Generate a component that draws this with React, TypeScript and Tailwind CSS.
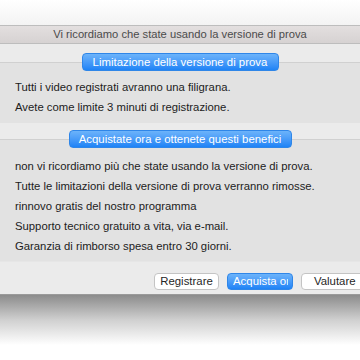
const font = { fontFamily: '"Liberation Sans", Arial, sans-serif' };

const blueBtn =
  'relative z-10 h-[18px] rounded-[4px] bg-gradient-to-b from-[#6cb3fa] to-[#1d83f6] border border-[#2f86e8] text-white text-[11.4px] leading-[16px] flex items-center justify-center';

function Line({ children }: { children: React.ReactNode }) {
  return <div className="h-[20px] leading-[20px] text-[11.3px] text-[#1c1c1c] whitespace-nowrap">{children}</div>;
}

export default function App() {
  return (
    <div className="w-[360px] h-[360px] bg-white overflow-hidden" style={font}>
      <div className="h-[25px] bg-gradient-to-b from-white to-[#f3f3f3]" />
      <div className="bg-[#ebebeb] border-b border-[#9a9a9a]">
        <div className="h-[19px] border-y border-[#bdbdbd] bg-gradient-to-b from-[#e3dfdf] to-[#d6d2d2] flex items-center justify-center text-[11.2px] text-[#4b4b4b] whitespace-nowrap">
          Vi ricordiamo che state usando la versione di prova
        </div>

        <div className="pt-[9px] flex justify-center">
          <div className={`${blueBtn} w-[197px]`}>Limitazione della versione di prova</div>
        </div>
        <div className="-mt-[9px] bg-[#e2e2e2] border-t border-[#d0d0d0] pl-[15px] pt-[14px] pb-[6px]">
          <Line>Tutti i video registrati avranno una filigrana.</Line>
          <Line>Avete come limite 3 minuti di registrazione.</Line>
        </div>

        <div className="pt-[7px] flex justify-center">
          <div className={`${blueBtn} w-[223px]`}>Acquistate ora e ottenete questi benefici</div>
        </div>
        <div className="-mt-[9px] bg-[#e2e2e2] border-t border-[#d0d0d0] pl-[15px] pt-[16px] pb-[5px]">
          <Line>non vi ricordiamo più che state usando la versione di prova.</Line>
          <Line>Tutte le limitazioni della versione di prova verranno rimosse.</Line>
          <Line>rinnovo gratis del nostro programma</Line>
          <Line>Supporto tecnico gratuito a vita, via e-mail.</Line>
          <Line>Garanzia di rimborso spesa entro 30 giorni.</Line>
        </div>

        <div className="h-[33px] pt-[11px] flex gap-[8px] pl-[154px] overflow-hidden border-t border-[#e6e6e6]">
          <div className="shrink-0 w-[65px] h-[17px] rounded-[4px] bg-white border border-[#c4c4c4] text-[11.4px] text-[#262626] flex items-center justify-center">
            Registrare
          </div>
          <div className="shrink-0 w-[66px] h-[17px] rounded-[4px] bg-gradient-to-b from-[#6cb3fa] to-[#1d83f6] border border-[#2f86e8] text-[11.4px] text-white flex items-center pl-[5px] pr-[4px]">
            <span className="overflow-hidden whitespace-nowrap">Acquista ora</span>
          </div>
          <div className="shrink-0 w-[80px] h-[17px] rounded-[4px] bg-white border border-[#c4c4c4] text-[11.4px] text-[#262626] flex items-center pl-[12px]">
            Valutare
          </div>
        </div>
      </div>
      <div className="h-[50px] bg-gradient-to-b from-[#8c8c8c] via-[#d0d0d0] to-white" />
    </div>
  );
}
